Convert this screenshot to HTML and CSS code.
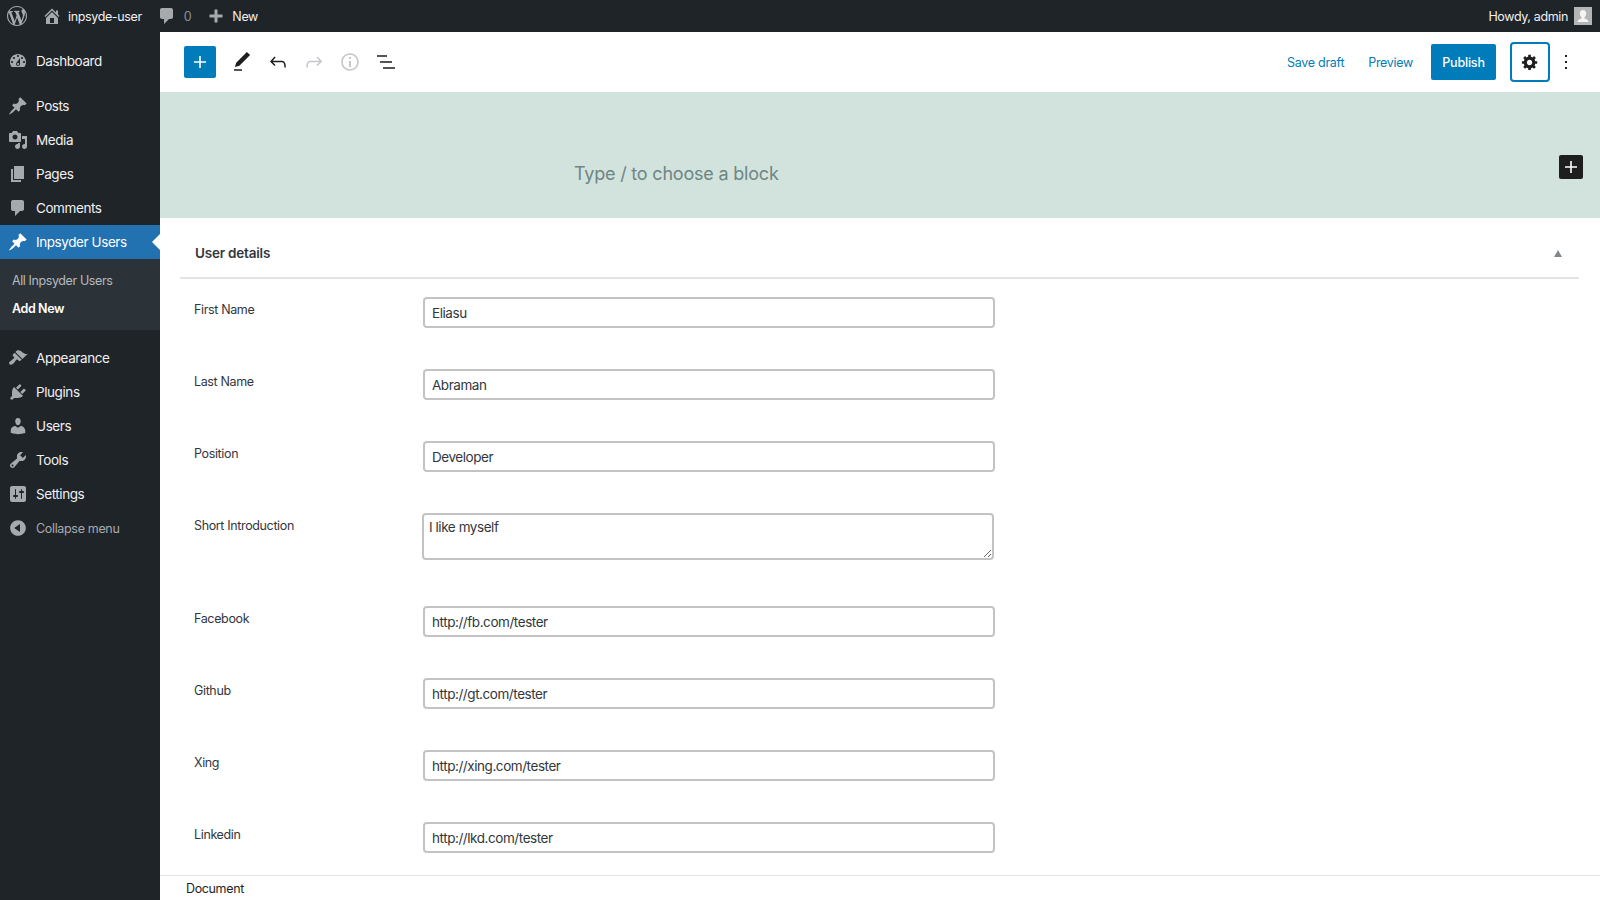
FILE: index.html
```html
<!DOCTYPE html>
<html>

	<head>
		<meta charset="UTF-8">
		<title>Add New Inpsyder User</title>
		<link rel="stylesheet" href="styles.css">
	</head>

	<body>
		<header class="adminbar">
			<div class="bar-left">
				<svg class="bar-logo" viewBox="0 0 20 20"><path d="M20 10c0-5.51-4.49-10-10-10C4.48 0 0 4.49 0 10c0 5.52 4.48 10 10 10 5.51 0 10-4.48 10-10zM7.78 15.37L4.37 6.22c.55-.02 1.17-.08 1.17-.08.5-.06.44-1.13-.06-1.11 0 0-1.45.11-2.37.11-.18 0-.37 0-.58-.01C4.12 2.69 6.87 1.11 10 1.11c2.33 0 4.45.87 6.05 2.34-.68-.11-1.65.39-1.65 1.58 0 .74.45 1.36.9 2.1.35.61.55 1.36.55 2.46 0 1.49-1.4 5-1.4 5l-3.03-8.37c.54-.02.82-.17.82-.17.5-.05.44-1.25-.06-1.22 0 0-1.44.12-2.38.12-.87 0-2.33-.12-2.33-.12-.5-.03-.56 1.2-.06 1.22l.92.08 1.26 3.41zM17.41 10c.24-.64.74-1.87.43-4.25.7 1.29 1.05 2.71 1.05 4.25 0 3.29-1.73 6.24-4.4 7.78.97-2.59 1.94-5.2 2.92-7.78zM6.1 18.09C3.12 16.65 1.11 13.53 1.11 10c0-1.3.23-2.48.72-3.59C3.25 10.3 4.67 14.2 6.1 18.09zm4.03-6.63l2.58 6.98c-.86.29-1.76.45-2.71.45-.79 0-1.57-.11-2.29-.33.81-2.38 1.62-4.74 2.42-7.1z"/></svg>
				<a class="bar-item bar-site">
					<svg class="bar-icon" viewBox="0 0 20 20"><path d="M16 8.5l1.53 1.53-1.06 1.06L10 4.62l-6.47 6.47-1.06-1.06L10 2.5l4 4v-2h2v4zm-6-2.46l6 5.99V18H4v-5.97zM12 17v-5H8v5h4z"/></svg>
					inpsyde-user
				</a>
				<a class="bar-item bar-comments">
					<svg class="bar-icon" viewBox="0 0 20 20"><path d="M5 2h9c1.1 0 2 .9 2 2v7c0 1.1-.9 2-2 2h-2l-5 5v-5H5c-1.1 0-2-.9-2-2V4c0-1.1.9-2 2-2z"/></svg>
					<span class="bar-count">0</span>
				</a>
				<a class="bar-item bar-new">
					<svg class="bar-icon" viewBox="0 0 20 20"><path d="M17 7v3h-5v5H9v-5H4V7h5V2h3v5h5z" transform="translate(-.5 1.5)"/></svg>
					New
				</a>
			</div>
			<div class="bar-right">
				Howdy, admin
				<span class="avatar">
					<svg viewBox="0 0 18 18"><path d="M9 3c2 0 3.2 1.6 3.2 3.6 0 1.5-.7 3-1.7 3.8v1.2c1.5.4 4 1.2 4 3.4H3.5c0-2.2 2.5-3 4-3.4v-1.2C6.5 9.6 5.8 8.1 5.8 6.6 5.8 4.6 7 3 9 3z"/></svg>
				</span>
			</div>
		</header>

		<div class="layout">
			<nav class="sidebar">
				<ul class="menu">
					<li class="menu-item">
						<svg viewBox="0 0 20 20"><path d="M3.76 16h12.48c1.1-1.37 1.76-3.11 1.76-5 0-4.42-3.58-8-8-8s-8 3.58-8 8c0 1.89.66 3.63 1.76 5zM10 4c.55 0 1 .45 1 1s-.45 1-1 1-1-.45-1-1 .45-1 1-1zM6 6c.55 0 1 .45 1 1s-.45 1-1 1-1-.45-1-1 .45-1 1-1zm8 0c.55 0 1 .45 1 1s-.45 1-1 1-1-.45-1-1 .45-1 1-1zm-5.37 5.55L12 7v6c0 1.1-.9 2-2 2s-2-.9-2-2c0-.57.24-1.08.63-1.45zM4 10c.55 0 1 .45 1 1s-.45 1-1 1-1-.45-1-1 .45-1 1-1zm12 0c.55 0 1 .45 1 1s-.45 1-1 1-1-.45-1-1 .45-1 1-1zm-5 3c0-.55-.45-1-1-1s-1 .45-1 1 .45 1 1 1 1-.45 1-1z" fill-rule="evenodd"/></svg>
						Dashboard
					</li>
				</ul>
				<ul class="menu menu-group">
					<li class="menu-item">
						<svg viewBox="0 0 20 20"><path d="M10.44 3.02l1.82-1.82 6.36 6.35-1.83 1.82c-1.05-.68-2.48-.57-3.41.36l-.75.75c-.92.93-1.04 2.35-.35 3.41l-1.83 1.82-2.41-2.41-2.8 2.79c-.42.42-3.38 2.71-3.8 2.29s1.86-3.39 2.28-3.81l2.79-2.79L4.1 9.36l1.83-1.82c1.05.69 2.48.57 3.4-.36l.75-.75c.93-.92 1.05-2.35.36-3.41z"/></svg>
						Posts
					</li>
					<li class="menu-item">
						<svg viewBox="0 0 20 20"><path d="M13 11V4c0-.55-.45-1-1-1h-1.67L9 1H5L3.67 3H2c-.55 0-1 .45-1 1v7c0 .55.45 1 1 1h10c.55 0 1-.45 1-1zM7 4.5c1.38 0 2.5 1.12 2.5 2.5S8.38 9.5 7 9.5 4.5 8.38 4.5 7 5.62 4.5 7 4.5zM14 6h5v10.5c0 1.38-1.12 2.5-2.5 2.5S14 17.88 14 16.5s1.12-2.5 2.5-2.5c.17 0 .34.02.5.05V9h-3V6zm-4 8.05V13h2v3.5c0 1.38-1.12 2.5-2.5 2.5S7 17.88 7 16.5 8.12 14 9.5 14c.17 0 .34.02.5.05z"/></svg>
						Media
					</li>
					<li class="menu-item">
						<svg viewBox="0 0 20 20"><path d="M6 15V2h10v13H6zm-1 1h8v2H3V5h2v11z"/></svg>
						Pages
					</li>
					<li class="menu-item">
						<svg viewBox="0 0 20 20"><path d="M5 2h9c1.1 0 2 .9 2 2v7c0 1.1-.9 2-2 2h-2l-5 5v-5H5c-1.1 0-2-.9-2-2V4c0-1.1.9-2 2-2z"/></svg>
						Comments
					</li>
					<li class="menu-item current">
						<svg viewBox="0 0 20 20"><path d="M10.44 3.02l1.82-1.82 6.36 6.35-1.83 1.82c-1.05-.68-2.48-.57-3.41.36l-.75.75c-.92.93-1.04 2.35-.35 3.41l-1.83 1.82-2.41-2.41-2.8 2.79c-.42.42-3.38 2.71-3.8 2.29s1.86-3.39 2.28-3.81l2.79-2.79L4.1 9.36l1.83-1.82c1.05.69 2.48.57 3.4-.36l.75-.75c.93-.92 1.05-2.35.36-3.41z"/></svg>
						Inpsyder Users
					</li>
				</ul>
				<ul class="submenu">
					<li>All Inpsyder Users</li>
					<li class="sub-current">Add New</li>
				</ul>
				<ul class="menu menu-group">
					<li class="menu-item">
						<svg viewBox="0 0 20 20"><path d="M14.48 11.06L7.41 3.99l1.5-1.5c.5-.56 2.3-.47 3.51.32 1.21.8 1.43 1.28 2.91 2.1 1.18.64 2.45 1.26 4.45.85zm-.71.71L6.7 4.7 4.93 6.47c-.39.39-.39 1.02 0 1.41l1.06 1.06c.39.39.39 1.03 0 1.42-.6.6-1.43 1.11-2.21 1.69-.35.26-.7.53-1.01.84C1.43 13.23.39 14.99 1.56 16.18c1.19 1.19 2.95.14 4.28-1.19.31-.31.58-.65.84-1.01.58-.78 1.09-1.61 1.69-2.21.39-.39 1.03-.39 1.42 0l1.06 1.06c.39.39 1.02.39 1.41 0z"/></svg>
						Appearance
					</li>
					<li class="menu-item">
						<svg viewBox="0 0 20 20"><path d="M13.11 4.36L9.87 7.6 8 5.73l3.24-3.24c.35-.34 1.05-.2 1.56.32.52.51.66 1.21.31 1.55zm-8 1.77l.91-1.12 9.01 9.01-1.19.84c-.71.71-2.63 1.16-3.82 1.16H6.14L4.9 17.26c-.59.59-1.54.59-2.12 0-.59-.58-.59-1.53 0-2.12l1.24-1.24v-3.88c0-1.13.4-3.19 1.09-3.89zm7.26 3.97l3.24-3.24c.34-.35 1.04-.21 1.55.31.52.51.66 1.21.31 1.55l-3.24 3.25z"/></svg>
						Plugins
					</li>
					<li class="menu-item">
						<svg viewBox="0 0 20 20"><path d="M10 9.25c-2.27 0-2.73-3.44-2.73-3.44C7 4.02 7.82 2 9.97 2c2.16 0 2.98 2.02 2.71 3.81 0 0-.41 3.44-2.68 3.44zm0 2.57L12.72 10c2.39 0 4.52 2.33 4.52 4.53v2.49s-3.65 1.13-7.24 1.13c-3.65 0-7.24-1.13-7.24-1.13v-2.49c0-2.25 1.94-4.48 4.47-4.48z"/></svg>
						Users
					</li>
					<li class="menu-item">
						<svg viewBox="0 0 20 20"><path d="M16.68 9.77c-1.34 1.34-3.3 1.67-4.95.99l-5.41 6.52c-.99.99-2.59.99-3.58 0s-.99-2.59 0-3.57l6.52-5.42c-.68-1.65-.35-3.61.99-4.95 1.28-1.28 3.12-1.62 4.72-1.06l-2.89 2.89 2.82 2.82 2.86-2.87c.53 1.58.18 3.39-1.08 4.65zM3.81 16.21c.4.39 1.04.39 1.43 0 .4-.4.4-1.04 0-1.43-.39-.4-1.03-.4-1.43 0-.39.39-.39 1.03 0 1.43z"/></svg>
						Tools
					</li>
					<li class="menu-item">
						<svg viewBox="0 0 20 20"><path d="M18 16V4c0-1.1-.9-2-2-2H4c-1.1 0-2 .9-2 2v12c0 1.1.9 2 2 2h12c1.1 0 2-.9 2-2zM8 11h1c.55 0 1 .45 1 1s-.45 1-1 1H8v1.5c0 .28-.22.5-.5.5s-.5-.22-.5-.5V13H6c-.55 0-1-.45-1-1s.45-1 1-1h1V5.5c0-.28.22-.5.5-.5s.5.22.5.5V11zm5-2h-1c-.55 0-1-.45-1-1s.45-1 1-1h1V5.5c0-.28.22-.5.5-.5s.5.22.5.5V7h1c.55 0 1 .45 1 1s-.45 1-1 1h-1v5.5c0 .28-.22.5-.5.5s-.5-.22-.5-.5V9z"/></svg>
						Settings
					</li>
					<li class="menu-item collapse">
						<svg viewBox="0 0 20 20"><path d="M10 2.16c4.33 0 7.84 3.51 7.84 7.84s-3.51 7.84-7.84 7.84S2.16 14.33 2.16 10 5.71 2.16 10 2.16zm2 11.72V6.12L6.18 9.97z"/></svg>
						Collapse menu
					</li>
				</ul>
			</nav>

			<main class="editor">
				<div class="toolbar">
					<div class="tools">
						<button class="inserter">
							<svg viewBox="0 0 24 24"><path d="M18 11.2h-5.2V6h-1.6v5.2H6v1.6h5.2V18h1.6v-5.2H18z"/></svg>
						</button>
						<button class="tool">
							<svg viewBox="0 0 24 24"><path d="M20.1 5.1L16.9 2 6.2 12.7l-1.3 4.4 4.5-1.3L20.1 5.1zM4 20.8h8v-1.5H4v1.5z"/></svg>
						</button>
						<button class="tool">
							<svg viewBox="0 0 24 24"><path d="M18.3 11.7c-.6-.6-1.4-.9-2.3-.9H6.7l2.9-3.3-1.1-1-4.5 5L8.5 16l1-1-2.7-2.7H16c.5 0 .9.2 1.3.5 1 1 1 3.4 1 4.5v.3h1.5v-.2c0-1.5 0-4.3-1.5-5.7z"/></svg>
						</button>
						<button class="tool tool-off">
							<svg viewBox="0 0 24 24"><path d="M15.6 6.5l-1.1 1 2.9 3.3H8c-.9 0-1.7.3-2.3.9-1.4 1.5-1.4 4.2-1.4 5.6v.2h1.5v-.3c0-1.1 0-3.5 1-4.5.3-.3.7-.5 1.3-.5h9.2L14.5 15l1.1 1.1 4.6-4.6-4.6-5z"/></svg>
						</button>
						<button class="tool tool-off">
							<svg viewBox="0 0 24 24"><path d="M12 3.2c-4.8 0-8.8 3.9-8.8 8.8 0 4.8 3.9 8.8 8.8 8.8 4.8 0 8.8-3.9 8.8-8.8 0-4.8-4-8.8-8.8-8.8zm0 16c-4 0-7.2-3.3-7.2-7.2C4.8 8 8 4.8 12 4.8s7.2 3.3 7.2 7.2c0 4-3.2 7.2-7.2 7.2zM11 17h2v-6h-2v6zm0-8h2V7h-2v2z"/></svg>
						</button>
						<button class="tool">
							<svg viewBox="0 0 24 24"><path d="M3 5.2h10v1.5H3zM6 11.2h12v1.6H6zM9 17.3h12v1.5H9z"/></svg>
						</button>
					</div>
					<div class="actions">
						<a class="action-link">Save draft</a>
						<a class="action-link preview-link">Preview</a>
						<button class="publish">Publish</button>
						<button class="settings-btn">
							<svg viewBox="0 0 20 20"><path d="M18 12h-2.18c-.17.7-.44 1.35-.81 1.93l1.54 1.54-2.1 2.1-1.54-1.54c-.58.36-1.23.63-1.91.79V19H8v-2.18c-.68-.16-1.33-.43-1.91-.79l-1.54 1.54-2.12-2.12 1.54-1.54c-.36-.58-.63-1.23-.79-1.91H1V9.03h2.17c.16-.7.44-1.35.8-1.94L2.43 5.55l2.1-2.1 1.54 1.54c.58-.37 1.24-.64 1.93-.81V2h3v2.18c.68.16 1.33.43 1.91.79l1.54-1.54 2.12 2.12-1.54 1.54c.36.59.64 1.24.8 1.94H18V12zm-8.5 1.5c1.66 0 3-1.34 3-3s-1.34-3-3-3-3 1.34-3 3 1.34 3 3 3z"/></svg>
						</button>
						<button class="more-btn">
							<svg viewBox="0 0 24 24"><path d="M13 19h-2v-2h2v2zm0-6h-2v-2h2v2zm0-6h-2V5h2v2z"/></svg>
						</button>
					</div>
				</div>

				<section class="cover">
					<p class="placeholder">Type / to choose a block</p>
					<button class="block-add">
						<svg viewBox="0 0 24 24"><path d="M18 11.2h-5.2V6h-1.6v5.2H6v1.6h5.2V18h1.6v-5.2H18z"/></svg>
					</button>
				</section>

				<section class="metabox">
					<div class="metabox-head">
						<h2>User details</h2>
						<span class="metabox-toggle"></span>
					</div>
					<form class="fields">
						<div class="field">
							<label>First Name</label>
							<input type="text" value="Eliasu">
						</div>
						<div class="field">
							<label>Last Name</label>
							<input type="text" value="Abraman">
						</div>
						<div class="field">
							<label>Position</label>
							<input type="text" value="Developer">
						</div>
						<div class="field field-tall">
							<label>Short Introduction</label>
							<textarea>I like myself</textarea>
						</div>
						<div class="field">
							<label>Facebook</label>
							<input type="text" value="http://fb.com/tester">
						</div>
						<div class="field">
							<label>Github</label>
							<input type="text" value="http://gt.com/tester">
						</div>
						<div class="field">
							<label>Xing</label>
							<input type="text" value="http://xing.com/tester">
						</div>
						<div class="field">
							<label>Linkedin</label>
							<input type="text" value="http://lkd.com/tester">
						</div>
					</form>
				</section>

				<footer class="statusbar">Document</footer>
			</main>
		</div>
	</body>

</html>
```

FILE: styles.css
```css
* {
	margin: 0;
	padding: 0;
	box-sizing: border-box;
}

li {
	list-style: none;
}

html,
body {
	height: 100%;
	overflow: hidden;
}

body {
	display: flex;
	flex-direction: column;
	font-family: Inter, "Liberation Sans", sans-serif;
	font-size: 12.5px;
	color: #32373c;
	background: #fff;
}

button {
	border: 0;
	background: none;
	display: flex;
	align-items: center;
	justify-content: center;
	font-family: inherit;
}

/* admin bar */
.adminbar {
	height: 32px;
	flex: none;
	background: #1f2429;
	color: #f0f0f1;
	display: flex;
	justify-content: space-between;
	align-items: center;
}

.bar-left,
.bar-item,
.bar-right {
	display: flex;
	align-items: center;
}

.bar-logo {
	width: 20px;
	height: 20px;
	margin-left: 7px;
	fill: #a7aaad;
}

.bar-item {
	letter-spacing: -0.36px;
}

.bar-icon {
	width: 20px;
	height: 20px;
	fill: #a7aaad;
}

.bar-site {
	margin-left: 15px;
	gap: 6px;
}

.bar-comments {
	margin-left: 15px;
	gap: 7px;
}

.bar-count {
	color: #8c8f94;
}

.bar-new {
	margin-left: 15px;
	gap: 6px;
}

.bar-right {
	gap: 6px;
	padding-right: 8px;
	letter-spacing: -0.36px;
}

.avatar {
	width: 18px;
	height: 18px;
	background: #b5b5b5;
	display: block;
}

.avatar svg {
	display: block;
	fill: #f4f4f4;
}

/* left menu */
.layout {
	flex: 1;
	display: flex;
	min-height: 0;
}

.sidebar {
	width: 160px;
	flex: none;
	background: #1f2429;
	padding-top: 12px;
	color: #f0f0f1;
}

.menu-group {
	margin-top: 11px;
}

.menu-item {
	height: 34px;
	display: flex;
	align-items: center;
	gap: 8px;
	padding-left: 8px;
	font-size: 13.5px;
	letter-spacing: -0.42px;
	position: relative;
}

.menu-item svg {
	width: 20px;
	height: 20px;
	flex: none;
	fill: #a7aaad;
}

.menu-item.current {
	background: #2271b1;
	color: #fff;
}

.menu-item.current svg {
	fill: #fff;
}

.menu-item.current::after {
	content: "";
	position: absolute;
	right: 0;
	top: 9px;
	border: 8px solid transparent;
	border-right-color: #fff;
	border-left-width: 0;
}

.menu-item.collapse {
	font-size: 12.5px;
	letter-spacing: -0.33px;
	color: #a7aaad;
}

.submenu {
	background: #2c3338;
	padding: 8px 0 7px;
	letter-spacing: -0.4px;
	color: #b4b9be;
}

.submenu li {
	height: 28px;
	line-height: 28px;
	padding-left: 12px;
}

.submenu li.sub-current {
	color: #fff;
	font-weight: 600;
}

/* top toolbar */
.editor {
	flex: 1;
	min-width: 0;
	display: flex;
	flex-direction: column;
}

.toolbar {
	height: 60px;
	flex: none;
	display: flex;
	justify-content: space-between;
	align-items: center;
	padding-left: 24px;
}

.tools,
.actions {
	display: flex;
	align-items: center;
}

.inserter {
	width: 32px;
	height: 32px;
	margin-right: 8px;
	background: #007cba;
	border-radius: 2px;
}

.inserter svg {
	width: 24px;
	height: 24px;
	fill: #fff;
}

.tool {
	width: 36px;
	height: 36px;
}

.tool svg {
	width: 24px;
	height: 24px;
	fill: #1e1e1e;
}

.tool-off svg {
	fill: #c4c6c9;
}

.action-link {
	letter-spacing: -0.3px;
	color: #007cba;
	margin-right: 24px;
}

.preview-link {
	margin-right: 18px;
}

.publish {
	width: 65px;
	height: 36px;
	margin-right: 14px;
	background: #007cba;
	color: #fff;
	font-size: 12.5px;
	font-weight: 500;
	letter-spacing: -0.2px;
	border-radius: 2px;
}

.settings-btn {
	width: 40px;
	height: 40px;
	border: 2px solid #007cba;
	border-radius: 4px;
}

.settings-btn svg {
	width: 18px;
	height: 18px;
	fill: #1e1e1e;
}

.more-btn {
	width: 24px;
	height: 24px;
	margin: 0 22px 0 4px;
}

.more-btn svg {
	width: 24px;
	height: 24px;
	fill: #1e1e1e;
}

/* cover block */
.cover {
	height: 126px;
	flex: none;
	background: #d2e3dd;
	position: relative;
	padding: 70px 0 0 414px;
}

.placeholder {
	font-size: 18px;
	line-height: 24px;
	letter-spacing: -0.2px;
	color: #6f8584;
}

.block-add {
	position: absolute;
	right: 17px;
	top: 63px;
	width: 24px;
	height: 24px;
	background: #1e1e1e;
	border-radius: 2px;
}

.block-add svg {
	width: 24px;
	height: 24px;
	fill: #fff;
}

/* meta box */
.metabox {
	flex: 1;
	min-height: 0;
	overflow: hidden;
	padding: 0 21px 0 20px;
}

.metabox-head {
	height: 61px;
	display: flex;
	justify-content: space-between;
	align-items: center;
	padding: 11px 17px 0 15px;
	border-bottom: 2px solid #e2e4e7;
}

.metabox-head h2 {
	font-size: 13.5px;
	font-weight: 600;
	letter-spacing: -0.2px;
	color: #32373c;
}

.metabox-toggle {
	border: 4.5px solid transparent;
	border-bottom: 7px solid #82878c;
	border-top-width: 0;
}

.fields {
	padding: 18px 0 0 14px;
}

.field {
	height: 72px;
	display: flex;
	align-items: flex-start;
}

.field-tall {
	height: 93px;
}

.field label {
	width: 229px;
	line-height: 20px;
	margin-top: 3px;
	letter-spacing: -0.36px;
}

.field input,
.field textarea {
	width: 572px;
	border: 2px solid #c3c3c3;
	border-radius: 4px;
	font-family: inherit;
	font-size: 13.5px;
	letter-spacing: -0.44px;
	color: #32373c;
	outline: none;
}

.field input {
	height: 31px;
	padding: 1px 7px 0;
}

.field textarea {
	height: 47px;
	margin-left: -1px;
	padding: 4px 5px;
}

/* bottom bar */
.statusbar {
	height: 25px;
	flex: none;
	border-top: 1px solid #e2e4e7;
	padding-left: 26px;
	line-height: 25px;
	letter-spacing: -0.36px;
	color: #1e1e1e;
}
```
